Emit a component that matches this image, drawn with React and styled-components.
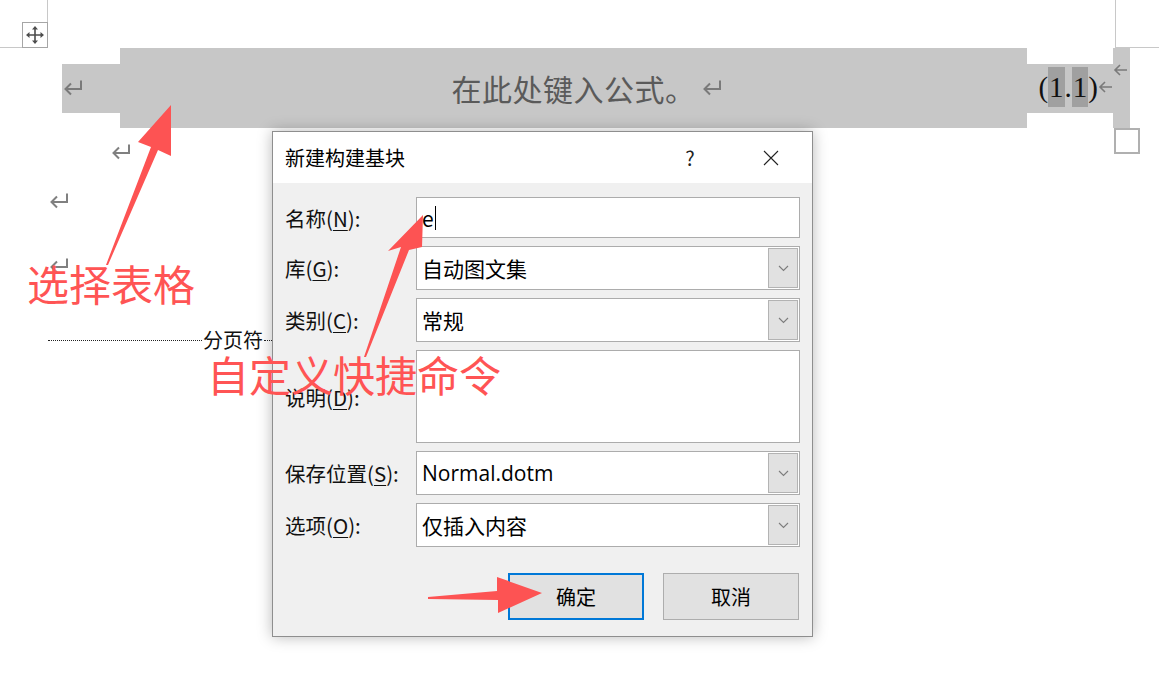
import React from 'react';
import styled, { createGlobalStyle } from 'styled-components';

const GlobalStyle = createGlobalStyle`
	html, body {
		margin: 0;
		padding: 0;
		background: #fff;
	}
	body {
		font-family: "Noto Sans CJK SC", "Noto Sans", sans-serif;
	}
	* {
		box-sizing: border-box;
	}
`;

const Return = ({ color = '#808080' }) => (
	<svg width="21" height="18" viewBox="0 0 21 18">
		<path d="M19 1.5V10H3.5" fill="none" stroke={color} strokeWidth="2" />
		<path d="M9 4.5L3.5 10L9 15.5" fill="none" stroke={color} strokeWidth="2" />
	</svg>
);

const LeftArrow = () => (
	<svg width="15" height="12" viewBox="0 0 15 12">
		<path d="M14 6H2M7 1L2 6L7 11" fill="none" stroke="#7a7a7a" strokeWidth="1.6" />
	</svg>
);

const MoveIcon = () => (
	<svg width="20" height="20" viewBox="0 0 20 20">
		<path d="M10 3V17M3 10H17" stroke="#4d4d4d" strokeWidth="1.6" />
		<path d="M10 1L13 4.5H7Z M10 19L13 15.5H7Z M1 10L4.5 7V13Z M19 10L15.5 7V13Z" fill="#4d4d4d" />
	</svg>
);

const Chevron = () => (
	<svg width="11" height="7" viewBox="0 0 11 7">
		<path d="M1 1L5.5 5.5L10 1" fill="none" stroke="#7c7c7c" strokeWidth="1.1" />
	</svg>
);

const Page = styled.div`
	position: relative;
	width: 1159px;
	height: 679px;
	overflow: hidden;
	background: #fff;
`;

const Doc = styled.div`
	display: flex;
	flex-direction: column;
`;

const TopMarks = styled.div`
	display: flex;
	justify-content: space-between;
	height: 48px;
`;

const Corner = styled.div`
	width: ${({ $w }) => $w}px;
	height: 48px;
	border-bottom: 1px solid #c8c8c8;
	border-${({ $side }) => $side}: 1px solid #c8c8c8;
	display: flex;
	align-items: flex-end;
	justify-content: flex-end;
`;

const MoveHandle = styled.div`
	width: 26px;
	height: 26px;
	margin: 0 -1px -1px 0;
	border: 1px solid #a6a6a6;
	background: #fff;
	display: flex;
	align-items: center;
	justify-content: center;
`;

const EquationRow = styled.div`
	display: flex;
	align-items: center;
	height: 80px;
	padding-left: 62px;
`;

const Cell = styled.div`
	display: flex;
	align-items: center;
	width: ${({ $w }) => $w}px;
	height: ${({ $h }) => $h}px;
	background: #c7c7c7;
`;

const MainCell = styled(Cell)`
	justify-content: center;
	color: #5a5a5a;
	font-size: 30px;
	letter-spacing: 0.5px;
	span {
		margin-right: -26px;
		margin-left: 5px;
		display: flex;
	}
`;

const NumCell = styled(Cell)`
	justify-content: flex-end;
	font-family: "Liberation Serif", serif;
	font-size: 29px;
	color: #111;
	padding-bottom: 2px;
`;

const Hl = styled.span`
	background: #a0a0a0;
	padding: 4px 1px 3px;
`;

const EndStrip = styled(Cell)`
	align-items: flex-start;
	padding-top: 16px;
	overflow: hidden;
`;

const Para = styled.div`
	display: flex;
	align-items: center;
	height: ${({ $h }) => $h}px;
	padding-left: ${({ $pl }) => $pl}px;
`;

const EndBox = styled.div`
	align-self: flex-start;
	margin-left: auto;
	margin-right: 19px;
	width: 26px;
	height: 26px;
	border: 2px solid #b0b0b0;
`;

const Dotted = styled.div`
	width: ${({ $w }) => $w}px;
	border-top: 1px dotted #222;
	margin-top: 3px;
`;

const BreakLabel = styled.span`
	font-size: 20px;
	color: #111;
	padding: 0 1px;
`;

const Dialog = styled.div`
	position: absolute;
	left: 272px;
	top: 131px;
	width: 541px;
	height: 506px;
	border: 1px solid #8e8e8e;
	background: #f0f0f0;
	box-shadow: 0 0 14px rgba(0, 0, 0, 0.28);
	display: flex;
	flex-direction: column;
`;

const TitleBar = styled.div`
	height: 51px;
	background: #fff;
	display: flex;
	align-items: center;
	padding-left: 12px;
	font-size: 20px;
	color: #000;
`;

const Title = styled.div`
	flex: 1;
`;

const TitleBtn = styled.div`
	width: ${({ $w }) => $w}px;
	display: flex;
	justify-content: center;
	align-items: center;
	font-size: 20px;
	color: #222;
`;

const Body = styled.div`
	display: grid;
	grid-template-columns: 131px 384px;
	row-gap: 8px;
	padding: 14px 11px 0 12px;
`;

const Label = styled.div`
	display: flex;
	align-items: center;
	font-size: 20.5px;
	color: #111;
	white-space: nowrap;
	u {
		text-decoration-thickness: 1px;
		text-underline-offset: 3px;
	}
`;

const Field = styled.div`
	height: ${({ $h }) => $h}px;
	background: #fff;
	border: 1px solid #acacac;
	display: flex;
	align-items: ${({ $top }) => ($top ? 'flex-start' : 'center')};
	padding-left: 5px;
	font-size: 21px;
	color: #000;
`;

const Caret = styled.span`
	display: inline-block;
	width: 1px;
	height: 24px;
	background: #000;
	margin-left: 1px;
`;

const LatinText = styled.span`
	font-family: "Open Sans", "Noto Sans", sans-serif;
	font-size: 21px;
`;

const DropBtn = styled.div`
	margin-left: auto;
	margin-right: 1px;
	width: 30px;
	height: 40px;
	background: #e1e1e1;
	border: 1px solid #b3b3b3;
	display: flex;
	align-items: center;
	justify-content: center;
`;

const Buttons = styled.div`
	grid-column: 1 / 3;
	display: flex;
	justify-content: flex-end;
	gap: 19px;
	margin-top: 18px;
	padding-right: 1px;
`;

const Button = styled.div`
	width: 136px;
	height: 47px;
	background: #e1e1e1;
	border: ${({ $primary }) => ($primary ? '2px solid #0078d7' : '1px solid #adadad')};
	display: flex;
	align-items: center;
	justify-content: center;
	font-size: 20px;
	color: #000;
`;

const Overlay = styled.svg`
	position: absolute;
	left: 0;
	top: 0;
	pointer-events: none;
`;

const Note = styled.div`
	position: absolute;
	left: ${({ $x }) => $x}px;
	top: ${({ $y }) => $y}px;
	font-size: 42px;
	line-height: 1;
	color: #ff5454;
	white-space: nowrap;
`;

const rows = [
	{ label: '库', key: 'G', value: '自动图文集' },
	{ label: '类别', key: 'C', value: '常规' },
];

const rowsBottom = [
	{ label: '保存位置', key: 'S', value: 'Normal.dotm', latin: true },
	{ label: '选项', key: 'O', value: '仅插入内容' },
];

const FieldLabel = ({ label, k }) => (
	<Label>
		{label}(<u>{k}</u>):
	</Label>
);

const Combo = ({ value, latin }) => (
	<Field $h={44}>
		{latin ? <LatinText>{value}</LatinText> : value}
		<DropBtn>
			<Chevron />
		</DropBtn>
	</Field>
);

export default function App() {
	return (
		<>
			<GlobalStyle />
			<Page>
				<Doc>
					<TopMarks>
						<Corner $w={48} $side="right">
							<MoveHandle>
								<MoveIcon />
							</MoveHandle>
						</Corner>
						<Corner $w={44} $side="left" />
					</TopMarks>

					<EquationRow>
						<Cell $w={58} $h={49}>
							<Return color="#7a7a7a" />
						</Cell>
						<MainCell $w={907} $h={80}>
							在此处键入公式。
							<span>
								<Return color="#7a7a7a" />
							</span>
						</MainCell>
						<NumCell $w={86} $h={49}>
							(<Hl>1</Hl>.<Hl>1</Hl>)
							<LeftArrow />
						</NumCell>
						<EndStrip $w={17} $h={80}>
							<LeftArrow />
						</EndStrip>
					</EquationRow>

					<Para $h={48} $pl={110}>
						<Return />
						<EndBox />
					</Para>
					<Para $h={50} $pl={48}>
						<Return />
					</Para>
					<Para $h={80} $pl={48}>
						<Return />
					</Para>
					<Para $h={66} $pl={48}>
						<Dotted $w={154} />
						<BreakLabel>分页符</BreakLabel>
						<Dotted $w={60} />
					</Para>
				</Doc>

				<Dialog>
					<TitleBar>
						<Title>新建构建基块</Title>
						<TitleBtn $w={82}>?</TitleBtn>
						<TitleBtn $w={80}>
							<svg width="16" height="16" viewBox="0 0 16 16">
								<path d="M1 1L15 15M15 1L1 15" stroke="#222" strokeWidth="1.1" />
							</svg>
						</TitleBtn>
						<TitleBtn $w={1} />
					</TitleBar>
					<Body>
						<FieldLabel label="名称" k="N" />
						<Field $h={41}>
							e<Caret />
						</Field>
						{rows.map((r) => (
							<React.Fragment key={r.key}>
								<FieldLabel label={r.label} k={r.key} />
								<Combo value={r.value} />
							</React.Fragment>
						))}
						<FieldLabel label="说明" k="D" />
						<Field $h={93} $top />
						{rowsBottom.map((r) => (
							<React.Fragment key={r.key}>
								<FieldLabel label={r.label} k={r.key} />
								<Combo value={r.value} latin={r.latin} />
							</React.Fragment>
						))}
						<Buttons>
							<Button $primary>确定</Button>
							<Button>取消</Button>
						</Buttons>
					</Body>
				</Dialog>

				<Note $x={27} $y={262}>选择表格</Note>
				<Note $x={207} $y={353}>自定义快捷命令</Note>

				<Overlay width="1159" height="679" viewBox="0 0 1159 679">
					<g fill="#fd5353">
						<polygon points="106,265 108,265 158,150 171,156 171,105 138,142 151,147" />
						<polygon points="364,357 366,357 409,250 422,247 423,215 388,251 401,247" />
						<polygon points="428,597 428,599 498,600 498,613 542,593 497,577 497,591" />
					</g>
				</Overlay>
			</Page>
		</>
	);
}
